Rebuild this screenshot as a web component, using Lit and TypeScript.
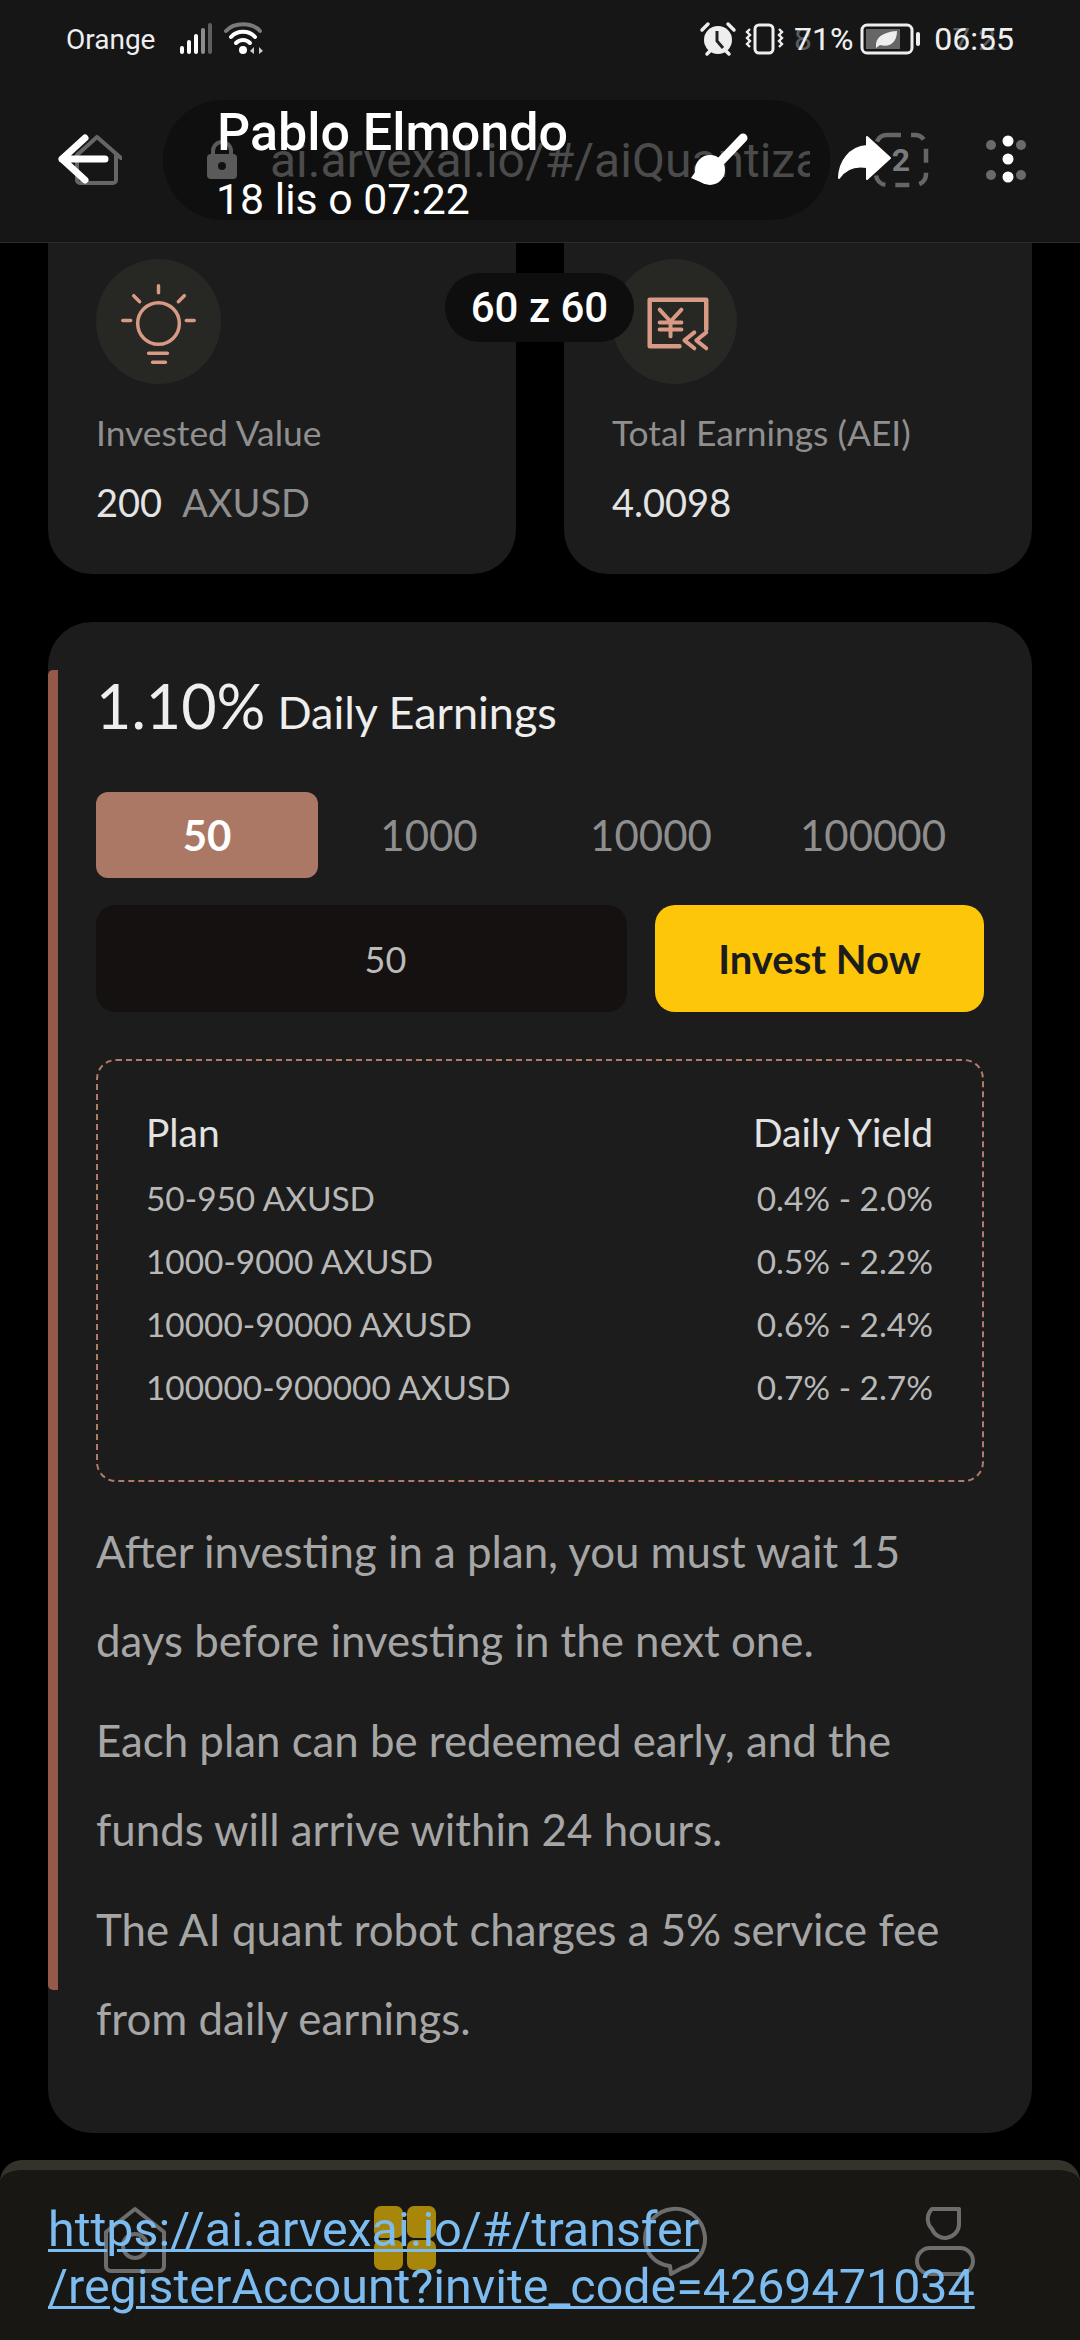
import { LitElement, html, css, svg } from "lit";
import { customElement } from "lit/decorators.js";

const PLANS = [
	["50-950 AXUSD", "0.4% - 2.0%"],
	["1000-9000 AXUSD", "0.5% - 2.2%"],
	["10000-90000 AXUSD", "0.6% - 2.4%"],
	["100000-900000 AXUSD", "0.7% - 2.7%"],
];
const TABS = ["50", "1000", "10000", "100000"];
const NOTES = [
	"After investing in a plan, you must wait 15 days before investing in the next one.",
	"Each plan can be redeemed early, and the funds will arrive within 24 hours.",
	"The AI quant robot charges a 5% service fee from daily earnings.",
];

const bulb = svg`
	<g fill="none" stroke="#d99a85" stroke-width="3.5" stroke-linecap="round">
		<circle cx="63" cy="65" r="21"/>
		<path d="M63 27v7M38 37l6 6M89 37l-6 6M27 62h8M91 62h8M53 95h19M57 104h13"/>
	</g>`;
const yuan = svg`
	<g fill="none" stroke="#d99a85" stroke-width="4.5" stroke-linecap="round" stroke-linejoin="round">
		<path d="M68 88H38V41h57v30"/>
		<path d="M48 51l11 12 11-12M48 64h22M48 71h22M59 63v15" stroke-width="4"/>
		<path d="M83 74l-10 8 10 8M95 74l-10 8 10 8" stroke-width="4"/>
	</g>`;

@customElement("app-root")
export class AppRoot extends LitElement {
	static styles = css`
		:host {
			display: flex;
			flex-direction: column;
			position: relative;
			width: 1080px;
			height: 2340px;
			overflow: hidden;
			background: #000;
			font-family: Lato, "Noto Sans", sans-serif;
			color: #e4e4e4;
		}
		svg { display: block; flex: none; }

		.header {
			flex: none;
			height: 243px;
			box-sizing: border-box;
			background: #161616;
			border-bottom: 1px solid #2b2b2b;
			font-family: Roboto, sans-serif;
		}
		.status {
			display: flex;
			align-items: center;
			height: 78px;
			padding: 0 66px;
			color: #eee;
			font-size: 28px;
		}
		.status .carrier { margin-right: 24px; }
		.status .right { margin-left: auto; display: flex; align-items: center; font-size: 32px; }
		.stack { position: relative; }
		.stack .ghost { position: absolute; left: 0; top: 0; color: #5c5c5c; }
		.stack .real { position: relative; }
		.pct { margin: 0 7px 0 8px; }
		.clock { margin-left: 12px; }
		.toolbar {
			display: flex;
			align-items: center;
			height: 164px;
			padding: 0 0 0 75px;
		}
		.pill {
			display: flex;
			align-items: center;
			box-sizing: border-box;
			width: 667px;
			height: 120px;
			margin: 0 43px 0 41px;
			padding: 0 20px 0 43px;
			border-radius: 60px;
			background: #0f0f0f;
			color: #4b4b4b;
			font-size: 48px;
		}
		.pill .url { margin-left: 32px; white-space: nowrap; overflow: hidden; }
		.gdots { margin-left: 56px; }

		.content { flex: none; display: flex; flex-direction: column; padding: 0 48px; }
		.stats { display: grid; grid-template-columns: 468px 468px; gap: 48px; height: 331px; }
		.stat {
			box-sizing: border-box;
			padding: 16px 48px 0;
			background: #1c1c1c;
			border-radius: 0 0 44px 44px;
		}
		.circle { width: 125px; height: 125px; border-radius: 50%; background: #272724; }
		.stat .label { margin-top: 28px; height: 42px; line-height: 42px; font-size: 35.4px; color: #8f8f8f; }
		.stat .value { margin-top: 27px; height: 42px; line-height: 42px; font-size: 38px; color: #e4e4e4; }
		.stat .unit { margin-left: 20px; color: #8f8f8f; }

		.plan {
			position: relative;
			box-sizing: border-box;
			height: 1511px;
			margin-top: 48px;
			padding: 48px 48px 0;
			background: #1c1c1c;
			border-radius: 44px;
		}
		.accent {
			position: absolute;
			left: 0;
			top: 48px;
			width: 10px;
			height: 1320px;
			border-radius: 5px 0 0 5px;
			background: #95594a;
		}
		.title { display: flex; align-items: baseline; height: 122px; line-height: 72px; font-size: 45px; color: #eee; }
		.title b { font-weight: 400; font-size: 61px; margin-right: 12px; }
		.tabs { display: grid; grid-template-columns: repeat(4, 222px); height: 86px; }
		.tab { display: flex; align-items: center; justify-content: center; font-size: 42px; color: #8e8e8e; border-radius: 12px; }
		.tab.on { background: #ac7866; color: #fff; font-weight: 700; }
		.buy { display: flex; gap: 28px; height: 107px; margin-top: 27px; }
		.amount {
			flex: none;
			box-sizing: border-box;
			width: 531px;
			padding-left: 48px;
			display: flex; align-items: center; justify-content: center;
			background: #141110;
			border-radius: 20px;
			font-size: 36px;
			color: #bbb;
		}
		.now {
			flex: none;
			width: 329px;
			display: flex; align-items: center; justify-content: center;
			background: #fdc608;
			border-radius: 20px;
			font-size: 40px;
			font-weight: 700;
			color: #1c1c1c;
		}
		.table {
			box-sizing: border-box;
			height: 423px;
			margin-top: 47px;
			padding: 40px 49px 0 48px;
			border: 2px dashed #b07c68;
			border-radius: 20px;
		}
		.row { display: flex; justify-content: space-between; height: 63px; line-height: 63px; font-size: 33.4px; color: #b8b8b8; }
		.row.head { height: 66px; line-height: 63px; font-size: 39px; color: #e2e2e2; }
		.notes { margin-top: 25px; }
		.notes p { margin: 0 0 11px; line-height: 89px; font-size: 43.8px; color: #a6a6a6; width: 860px; }

		.nav {
			flex: none;
			box-sizing: border-box;
			height: 180px;
			margin-top: 27px;
			padding-top: 36px;
			display: grid;
			grid-template-columns: repeat(4, 270px);
			justify-items: center;
			align-items: start;
			background: #181714;
			border-top: 10px solid #35322b;
			border-radius: 22px 22px 0 0;
		}

		.viewer { position: absolute; inset: 0; pointer-events: none; font-family: Roboto, sans-serif; color: #fff; }
		.viewer > * { position: absolute; }
		.who { left: 217px; top: 104px; }
		.who .name { font-size: 52px; line-height: 58px; font-weight: 500; }
		.who .when { margin-top: 12px; margin-left: -1px; font-size: 42.8px; line-height: 50px; }
		.back { left: 55px; top: 130px; }
		.brush { left: 690px; top: 130px; }
		.share { left: 835px; top: 133px; }
		.dots { left: 998px; top: 130px; }
		.count {
			left: 445px;
			top: 273px;
			width: 189px;
			height: 69px;
			display: flex; align-items: center; justify-content: center;
			border-radius: 35px;
			background: #0e0e0e;
			font-size: 42px;
			font-weight: 500;
		}
		.link {
			left: 48px;
			top: 2201px;
			font-size: 48.4px;
			line-height: 57px;
			color: #7cbcf0;
			text-decoration: underline;
			text-decoration-thickness: 3px;
			text-underline-offset: 3px;
		}
	`;

	private statusBar() {
		return html`
			<div class="status">
				<span class="carrier">Orange</span>
				<svg width="34" height="34" viewBox="0 0 34 34">
					<g stroke-width="4" stroke-linecap="round">
						<path d="M3 30v-4M10 30V20M17 30V14" stroke="#fff"/>
						<path d="M24 30V8" stroke="#8c8c8c"/>
						<path d="M31 30V3" stroke="#5e5e5e"/>
					</g>
				</svg>
				<svg width="42" height="36" viewBox="0 0 42 36" style="margin-left:11px">
					<g fill="none" stroke-linecap="round" stroke-width="4">
						<path d="M2 10C10 1 28 1 36 10" stroke="#7a7a7a"/>
						<path d="M7 16C13 9 25 9 31 16" stroke="#fff"/>
						<path d="M12 22C16 18 22 18 26 22" stroke="#fff"/>
					</g>
					<circle cx="19" cy="29" r="4" fill="#fff"/>
					<path d="M30 26l-4 4 4 3zM35 26v7l4-3z" fill="#ccc"/>
				</svg>
				<div class="right">
					<svg width="38" height="36" viewBox="0 0 38 36">
						<circle cx="19" cy="19" r="14" fill="#eee"/>
						<path d="M18 10v10l6 7" fill="none" stroke="#222" stroke-width="3"/>
						<path d="M3 9l6-6M35 9l-6-6M8 33l3-3M30 33l-3-3" stroke="#eee" stroke-width="3.5" stroke-linecap="round"/>
					</svg>
					<svg width="42" height="32" viewBox="0 0 42 32" style="margin-left:7px">
						<rect x="11" y="2" width="18" height="28" rx="4" fill="none" stroke="#eee" stroke-width="3"/>
						<path d="M6 6l-3 3 3 3-3 3 3 3-3 3 3 3M35 6l3 3-3 3 3 3-3 3 3 3-3 3" fill="none" stroke="#eee" stroke-width="2.4"/>
					</svg>
					<span class="stack pct"><span class="ghost">81%</span><span class="real">71%</span></span>
					<svg width="62" height="32" viewBox="0 0 62 32">
						<rect x="2" y="2" width="50" height="28" rx="5" fill="none" stroke="#eee" stroke-width="3"/>
						<rect x="6" y="6" width="34" height="20" fill="#666"/>
						<path d="M16 24c-1-9 6-15 21-16 0 11-7 17-17 14l-4 3z" fill="#eee"/>
						<rect x="56" y="9" width="4" height="14" rx="2" fill="#eee"/>
					</svg>
					<span class="stack clock"><span class="ghost">07:25</span><span class="real">06:55</span></span>
				</div>
			</div>`;
	}

	private toolbar() {
		return html`
			<div class="toolbar">
				<svg width="47" height="50" viewBox="0 0 47 50">
					<path d="M46 23L22 2 2 20v25a3 3 0 0 0 3 3h33a3 3 0 0 0 3-3V20" fill="none" stroke="#666" stroke-width="4" stroke-linecap="round" stroke-linejoin="round"/>
				</svg>
				<div class="pill">
					<svg width="32" height="40" viewBox="0 0 32 40">
						<path d="M7 16v-5a9 9 0 0 1 18 0v5" fill="none" stroke="#5a5a5a" stroke-width="4"/>
						<rect x="1" y="14" width="30" height="25" rx="4" fill="#5a5a5a"/>
						<circle cx="16" cy="26" r="4" fill="#111"/>
					</svg>
					<span class="url">ai.arvexai.io/#/aiQuantiza</span>
				</div>
				<svg width="56" height="56" viewBox="0 0 56 56">
					<rect x="3" y="3" width="50" height="50" rx="11" fill="none" stroke="#666" stroke-width="4.5" stroke-dasharray="14 10"/>
					<text x="28" y="39" text-anchor="middle" font-family="Roboto, sans-serif" font-weight="700" font-size="32" fill="#7a7a7a">2</text>
				</svg>
				<svg class="gdots" width="44" height="44" viewBox="0 0 44 44">
					<g fill="#6a6a6a"><circle cx="6" cy="7" r="5"/><circle cx="6" cy="37" r="5"/><circle cx="36" cy="7" r="5"/><circle cx="36" cy="37" r="5"/></g>
				</svg>
			</div>`;
	}

	private navBar() {
		return html`
			<nav class="nav">
				<svg width="66" height="68" viewBox="0 0 66 68">
					<g fill="none" stroke="#6d6d6d" stroke-width="4" stroke-linejoin="round">
						<path d="M33 3L4 26v34a5 5 0 0 0 5 5h48a5 5 0 0 0 5-5V26z"/>
						<circle cx="33" cy="40" r="12"/>
					</g>
				</svg>
				<svg width="62" height="64" viewBox="0 0 62 64">
					<g fill="#a8860a">
						<rect x="0" y="0" width="29" height="32" rx="7"/>
						<rect x="33" y="0" width="29" height="32" rx="7"/>
						<rect x="0" y="34" width="29" height="30" rx="7"/>
						<rect x="33" y="34" width="29" height="30" rx="7"/>
					</g>
				</svg>
				<svg width="66" height="70" viewBox="0 0 66 70">
					<path d="M28 60C12 58 3 46 3 33a30 30 0 1 1 37 29l-11 6z" fill="none" stroke="#6d6d6d" stroke-width="4" stroke-linejoin="round"/>
				</svg>
				<svg width="62" height="70" viewBox="0 0 62 70">
					<g fill="none" stroke="#6d6d6d" stroke-width="4">
						<path d="M18 3h27v16a14 14 0 0 1-27 4 14 14 0 0 1 0-20z" stroke-linejoin="round"/>
						<rect x="3" y="42" width="56" height="26" rx="13"/>
					</g>
				</svg>
			</nav>`;
	}

	private viewer() {
		return html`
			<div class="viewer">
				<svg class="back" width="56" height="60" viewBox="0 0 56 60">
					<path d="M30 8L7 29l23 21M7 29h43" fill="none" stroke="#fff" stroke-width="7" stroke-linecap="round" stroke-linejoin="round"/>
				</svg>
				<div class="who">
					<div class="name">Pablo Elmondo</div>
					<div class="when">18 lis o 07:22</div>
				</div>
				<svg class="brush" width="60" height="62" viewBox="0 0 60 62">
					<path d="M53 8L32 30" stroke="#fff" stroke-width="9" stroke-linecap="round"/>
					<circle cx="20" cy="40" r="15" fill="#fff"/>
					<path d="M12 32L1 48l14 6z" fill="#fff"/>
				</svg>
				<svg class="share" width="60" height="50" viewBox="0 0 60 50">
					<path d="M32 4l23 21-23 21V34C20 32 10 36 4 45 4 30 14 14 32 13z" fill="#fff" stroke="#fff" stroke-width="2" stroke-linejoin="round"/>
				</svg>
				<svg class="dots" width="20" height="60" viewBox="0 0 20 60">
					<g fill="#fff"><circle cx="10" cy="11" r="5.5"/><circle cx="10" cy="29" r="5.5"/><circle cx="10" cy="47" r="5.5"/></g>
				</svg>
				<div class="count">60 z 60</div>
				<div class="link">https://ai.arvexai.io/#/transfer<br />/registerAccount?invite_code=4269471034</div>
			</div>`;
	}

	render() {
		return html`
			<header class="header">
				${this.statusBar()}
				${this.toolbar()}
			</header>
			<main class="content">
				<section class="stats">
					<div class="stat">
						<div class="circle"><svg width="125" height="125" viewBox="0 0 126 126">${bulb}</svg></div>
						<div class="label">Invested Value</div>
						<div class="value">200<span class="unit">AXUSD</span></div>
					</div>
					<div class="stat">
						<div class="circle"><svg width="125" height="125" viewBox="0 0 126 126">${yuan}</svg></div>
						<div class="label">Total Earnings (AEI)</div>
						<div class="value">4.0098</div>
					</div>
				</section>
				<section class="plan">
					<div class="accent"></div>
					<div class="title"><b>1.10%</b>Daily Earnings</div>
					<div class="tabs">
						${TABS.map((t, i) => html`<div class="tab ${i === 0 ? "on" : ""}">${t}</div>`)}
					</div>
					<div class="buy">
						<div class="amount">50</div>
						<div class="now">Invest Now</div>
					</div>
					<div class="table">
						<div class="row head"><span>Plan</span><span>Daily Yield</span></div>
						${PLANS.map(([a, b]) => html`<div class="row"><span>${a}</span><span>${b}</span></div>`)}
					</div>
					<div class="notes">
						${NOTES.map((n) => html`<p>${n}</p>`)}
					</div>
				</section>
			</main>
			${this.navBar()}
			${this.viewer()}
		`;
	}
}
